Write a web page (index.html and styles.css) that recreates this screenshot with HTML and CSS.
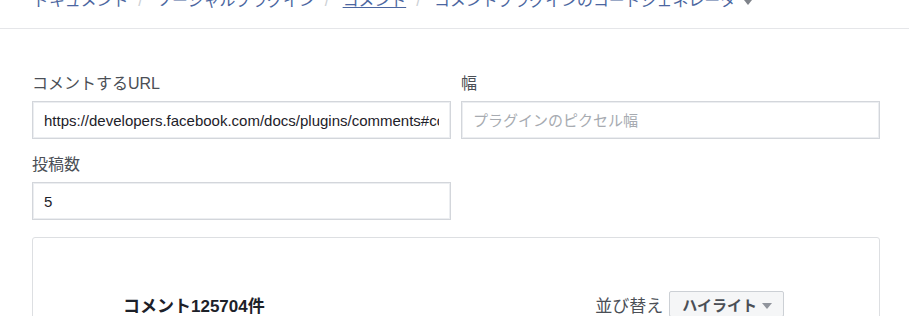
FILE: index.html
```html
<!DOCTYPE html>
<html lang="ja">
<head>
    <meta charset="UTF-8">
    <meta name="viewport" content="width=device-width, initial-scale=1.0">
    <title>コメントプラグインのコードジェネレータ</title>
    <link rel="stylesheet" href="styles.css">
</head>
<body>
    <div class="migas">
        <a href="#">ドキュメント</a><span class="sep">/</span>
        <a href="#">ソーシャルプラグイン</a><span class="sep">/</span>
        <a href="#" class="atual">コメント</a><span class="sep">/</span>
        <a href="#">コメントプラグインのコードジェネレータ</a><span class="seta"></span>
    </div>

    <div class="form">
        <div class="campo">
            <label>コメントするURL</label>
            <input class="entrada" type="text" value="https://developers.facebook.com/docs/plugins/comments#configurator">
        </div>
        <div class="campo">
            <label>幅</label>
            <input class="entrada" type="text" placeholder="プラグインのピクセル幅">
        </div>
        <div class="campo">
            <label>投稿数</label>
            <input class="entrada" type="text" value="5">
        </div>
    </div>

    <div class="preview">
        <div class="cabecalho">
            <div class="total">コメント125704件</div>
            <div class="ordem">
                <span>並び替え</span>
                <button class="botao">ハイライト<span class="tri"></span></button>
            </div>
        </div>
    </div>
</body>
</html>
```

FILE: styles.css
```css
body,html{
    margin: 0;
    font-family: 'Liberation Sans', 'Noto Sans CJK JP', sans-serif;
    color: #4b4f56;
    background: #fff;
}
.migas{
    margin-top: -9px;
    padding: 0 0 0 33px;
    height: 37px;
    line-height: 20px;
    font-size: 15.9px;
    border-bottom: 1px solid #e5e6e9;
    white-space: nowrap;
    overflow: hidden;
}
.migas a{
    color: #4b66a0;
    text-decoration: none;
}
.migas a.atual{
    text-decoration: underline;
}
.sep{
    color: #ccd0d5;
    margin: 0 9px 0 10px;
}
.seta{
    display: inline-block;
    margin-left: 8px;
    border-left: 4px solid transparent;
    border-right: 4px solid transparent;
    border-top: 5px solid #7f838a;
    vertical-align: 1px;
}
.form{
    display: grid;
    grid-template-columns: 419px 419px;
    column-gap: 10px;
    row-gap: 16px;
    padding: 45px 0 0 32px;
}
.campo label{
    display: block;
    font-size: 16px;
    line-height: 20px;
    margin-bottom: 7px;
}
.entrada{
    box-sizing: border-box;
    width: 100%;
    height: 38px;
    padding: 0 11px;
    border: 1px solid #d3d6db;
    box-shadow: inset 0 0 0 1px #eceef1;
    font-family: 'Liberation Sans', 'Noto Sans CJK JP', sans-serif;
    font-size: 15px;
    color: #1d2129;
    outline: none;
}
.entrada::placeholder{
    color: #a7abb1;
}
.preview{
    margin: 17px 29px 0 32px;
    border: 1px solid #dddfe2;
    border-radius: 3px;
    height: 200px;
}
.cabecalho{
    display: flex;
    justify-content: space-between;
    align-items: center;
    padding: 53px 95px 0 90px;
}
.total{
    font-size: 17px;
    font-weight: bold;
    color: #1d2129;
}
.ordem{
    display: flex;
    align-items: center;
    font-size: 17px;
}
.botao{
    margin-left: 6px;
    height: 26px;
    padding: 0 11px 0 12px;
    background: #f5f6f7;
    border: 1px solid #ccd0d5;
    border-radius: 2px;
    font-family: 'Liberation Sans', 'Noto Sans CJK JP', sans-serif;
    font-size: 15px;
    font-weight: bold;
    color: #4b4f56;
}
.tri{
    display: inline-block;
    margin-left: 5px;
    border-left: 5px solid transparent;
    border-right: 5px solid transparent;
    border-top: 6px solid #90949c;
    vertical-align: 2px;
}
```
